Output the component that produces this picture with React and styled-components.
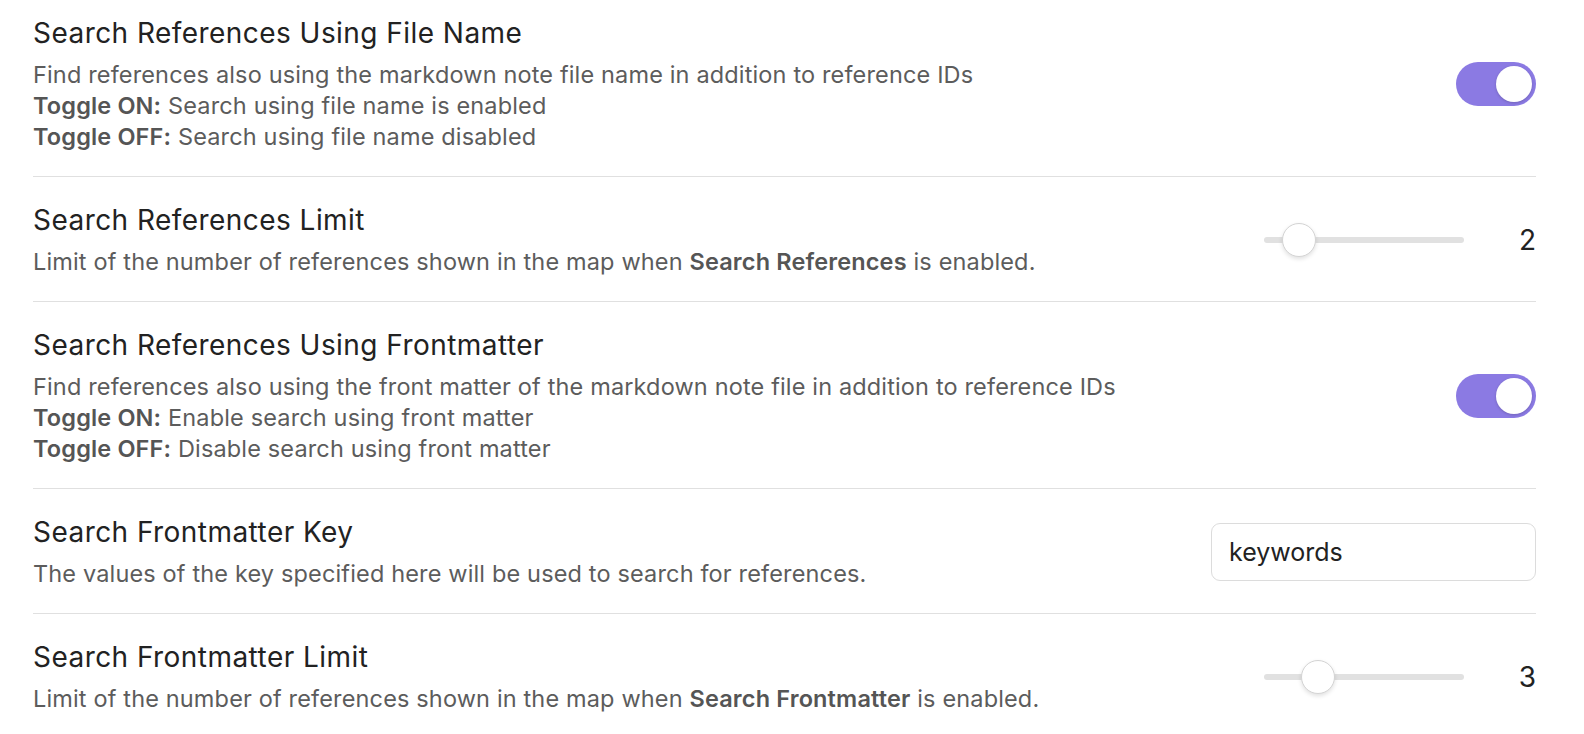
import { useState } from 'react';
import styled, { createGlobalStyle } from 'styled-components';

const GlobalStyle = createGlobalStyle`
  html, body {
    margin: 0;
    background: #ffffff;
  }
  body {
    font-family: Inter, "Noto Sans", sans-serif;
    -webkit-font-smoothing: antialiased;
  }
`;

const SettingsPane = styled.div`
  padding: 0 48px 0 33px;
  background: #ffffff;
`;

const SettingItem = styled.div`
  display: flex;
  align-items: center;
  gap: 40px;
  padding: 26px 0 24px;
  border-top: 1px solid #e0e0e0;

  &:first-child {
    border-top: none;
    padding-top: 16px;
  }
`;

const SettingInfo = styled.div`
  flex: 1;
  display: flex;
  flex-direction: column;
  gap: 9px;
  min-width: 0;
`;

const SettingName = styled.div`
  font-size: 28px;
  line-height: 34px;
  color: #222222;
  letter-spacing: 0.45px;
`;

const SettingDesc = styled.div`
  font-size: 23.5px;
  line-height: 31px;
  color: #5c5c5c;
  letter-spacing: 0.15px;

  strong {
    font-weight: 600;
    color: #555555;
  }
`;

const SettingControl = styled.div`
  flex: none;
  display: flex;
  align-items: center;
  gap: 40px;
`;

const ToggleTrack = styled.button`
  position: relative;
  width: 80px;
  height: 44px;
  border: none;
  padding: 0;
  border-radius: 22px;
  cursor: pointer;
  background: ${(p) => (p.$on ? '#8b7ae3' : '#d8d8d8')};
  transition: background 0.15s;
`;

const ToggleKnob = styled.span`
  position: absolute;
  top: 4px;
  left: ${(p) => (p.$on ? '40px' : '4px')};
  width: 36px;
  height: 36px;
  border-radius: 50%;
  background: #ffffff;
  box-shadow: 0 1px 3px rgba(0, 0, 0, 0.18);
  transition: left 0.15s;
`;

const Range = styled.input.attrs({ type: 'range' })`
  -webkit-appearance: none;
  appearance: none;
  width: 200px;
  height: 36px;
  margin: 0;
  background: transparent;
  cursor: pointer;

  &::-webkit-slider-runnable-track {
    height: 6px;
    border-radius: 3px;
    background: #e1e1e1;
  }

  &::-webkit-slider-thumb {
    -webkit-appearance: none;
    width: 34px;
    height: 34px;
    margin-top: -14px;
    border-radius: 50%;
    background: #ffffff;
    border: 1.5px solid #d4d4d4;
    box-sizing: border-box;
    box-shadow: 0 2px 4px rgba(0, 0, 0, 0.12);
  }
`;

const RangeValue = styled.span`
  width: 32px;
  text-align: right;
  font-size: 28px;
  color: #222222;
`;

const TextInput = styled.input`
  width: 325px;
  height: 58px;
  box-sizing: border-box;
  padding: 0 17px;
  border: 1.5px solid #dcdcdc;
  border-radius: 9px;
  font-family: inherit;
  font-size: 25px;
  color: #222222;
  background: #ffffff;
  outline: none;
`;

function Toggle({ initial }) {
  const [on, setOn] = useState(initial);
  return (
    <ToggleTrack $on={on} onClick={() => setOn(!on)}>
      <ToggleKnob $on={on} />
    </ToggleTrack>
  );
}

function Slider({ initial }) {
  const [value, setValue] = useState(initial);
  return (
    <>
      <Range
        min={1}
        max={10}
        step={1}
        value={value}
        onChange={(e) => setValue(Number(e.target.value))}
      />
      <RangeValue>{value}</RangeValue>
    </>
  );
}

export default function App() {
  const [key, setKey] = useState('keywords');

  return (
    <>
      <GlobalStyle />
      <SettingsPane>
        <SettingItem>
          <SettingInfo>
            <SettingName>Search References Using File Name</SettingName>
            <SettingDesc>
              Find references also using the markdown note file name in addition to reference IDs
              <br />
              <strong>Toggle ON:</strong> Search using file name is enabled
              <br />
              <strong>Toggle OFF:</strong> Search using file name disabled
            </SettingDesc>
          </SettingInfo>
          <SettingControl>
            <Toggle initial={true} />
          </SettingControl>
        </SettingItem>

        <SettingItem>
          <SettingInfo>
            <SettingName>Search References Limit</SettingName>
            <SettingDesc>
              Limit of the number of references shown in the map when <strong>Search References</strong> is enabled.
            </SettingDesc>
          </SettingInfo>
          <SettingControl>
            <Slider initial={2} />
          </SettingControl>
        </SettingItem>

        <SettingItem>
          <SettingInfo>
            <SettingName>Search References Using Frontmatter</SettingName>
            <SettingDesc>
              Find references also using the front matter of the markdown note file in addition to reference IDs
              <br />
              <strong>Toggle ON:</strong> Enable search using front matter
              <br />
              <strong>Toggle OFF:</strong> Disable search using front matter
            </SettingDesc>
          </SettingInfo>
          <SettingControl>
            <Toggle initial={true} />
          </SettingControl>
        </SettingItem>

        <SettingItem>
          <SettingInfo>
            <SettingName>Search Frontmatter Key</SettingName>
            <SettingDesc>
              The values of the key specified here will be used to search for references.
            </SettingDesc>
          </SettingInfo>
          <SettingControl>
            <TextInput value={key} onChange={(e) => setKey(e.target.value)} />
          </SettingControl>
        </SettingItem>

        <SettingItem>
          <SettingInfo>
            <SettingName>Search Frontmatter Limit</SettingName>
            <SettingDesc>
              Limit of the number of references shown in the map when <strong>Search Frontmatter</strong> is enabled.
            </SettingDesc>
          </SettingInfo>
          <SettingControl>
            <Slider initial={3} />
          </SettingControl>
        </SettingItem>
      </SettingsPane>
    </>
  );
}
